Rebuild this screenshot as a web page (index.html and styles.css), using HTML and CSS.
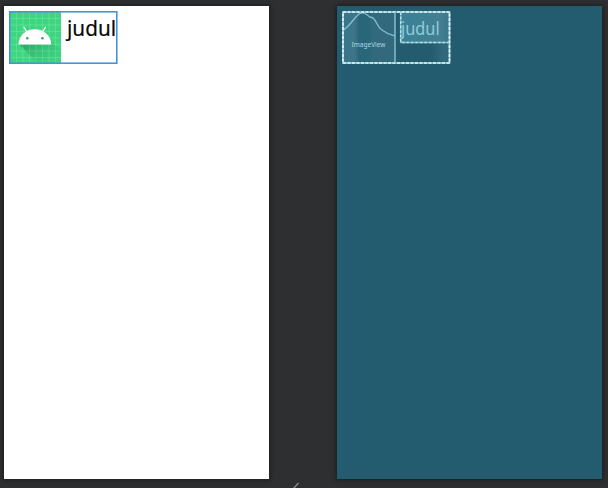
FILE: index.html
```html
<!DOCTYPE html>
<html lang="id">
<head>
<meta charset="utf-8">
<title>Layout Editor</title>
<link rel="stylesheet" href="styles.css">
</head>
<body>
<main class="editor">
  <section class="screen design">
    <div class="item">
      <svg class="launcher" viewBox="0 0 51 51">
        <defs>
          <linearGradient id="shade" x1="0" y1="0" x2="1" y2="1">
            <stop offset="0" stop-color="#26905c"/>
            <stop offset="1" stop-color="#3cd681" stop-opacity=".2"/>
          </linearGradient>
        </defs>
        <rect width="51" height="51" fill="#3ed780"/>
        <path d="M9 32L27 51H51V39L37.5 26Z" fill="url(#shade)"/>
        <path d="M6.5 0V51M13 0V51M19.5 0V51M26 0V51M32.5 0V51M39 0V51M45.5 0V51M0 6.5H51M0 13H51M0 19.5H51M0 26H51M0 32.5H51M0 39H51M0 45.5H51" fill="none" stroke="#a4f0c5" stroke-width=".7" opacity=".38"/>
        <path d="M16.6 19.5L14 15.3M32.8 19.5L35.4 15.3" stroke="#fff" stroke-width="1.3" stroke-linecap="round"/>
        <path d="M8.3 32.5C9 23.5 15.5 17.3 24.8 17.3S40.6 23.5 41.4 32.5Z" fill="#fff"/>
        <circle cx="17.3" cy="26.2" r="1.3" fill="#35a56b"/>
        <circle cx="32.4" cy="26.2" r="1.3" fill="#35a56b"/>
      </svg>
      <span class="title">judul</span>
      <svg class="outline" viewBox="0 0 109 53"><rect x=".8" y=".8" width="107" height="51.4" fill="none" stroke="#4a93d6" stroke-width="1.6"/></svg>
    </div>
  </section>
  <section class="screen blueprint">
    <div class="item">
      <div class="image-view">
        <svg class="mountain" viewBox="0 0 52 51">
          <path d="M0 18C7 15 13 2 18 1C22 0 24 3 27 5L30 6C34 9 34 15 39 18C43 21 47 23 52 24" fill="none" stroke="#80bdcc" stroke-width="1.4"/>
        </svg>
        <span class="view-name">ImageView</span>
      </div>
      <div class="text-view"><span class="title">judul</span></div>
      <svg class="outline" viewBox="0 0 109 53">
        <path d="M1 1H107.5V52H1Z" fill="none" stroke="#9bced8" stroke-width="1.7"/>
        <path d="M1 1H107.5V52H1Z" fill="none" stroke="#e0f5f8" stroke-width="1.7" stroke-dasharray="3 1.5"/>
        <path d="M53 1V52" fill="none" stroke="#86bdc9" stroke-width="1.5"/>
        <path d="M58.7 1V31.5H107.5" fill="none" stroke="#73adbd" stroke-width="1.5"/>
        <path d="M58.7 1V31.5H107.5" fill="none" stroke="#b0e0e9" stroke-width="1.5" stroke-dasharray="3 1.5"/>
      </svg>
    </div>
  </section>
</main>
<footer class="footer">
  <svg class="handle" viewBox="0 0 8 7"><path d="M1 7L6.5 1" stroke="#909294" stroke-width="1.2"/></svg>
</footer>
</body>
</html>
```
FILE: styles.css
```css
* { box-sizing: border-box; }
body {
  margin: 0;
  width: 608px;
  height: 488px;
  overflow: hidden;
  background: #2d2f31;
  font-family: "Noto Sans", sans-serif;
}
.editor {
  display: flex;
  gap: 68px;
  height: 480px;
  padding: 6px 0 0 4px;
}
.screen {
  flex: none;
  width: 265px;
  height: 473px;
  padding: 5px;
  box-shadow: 0 0 4px 1px #1c1d1e;
}
.design { background: #fff; }
.blueprint {
  background: #235c6f;
}
.item {
  display: flex;
  position: relative;
  width: 109px;
  height: 53px;
}
.launcher {
  flex: none;
  width: 51px;
  height: 51px;
  margin: 1px 0 0 1px;
}
.title {
  display: block;
  white-space: nowrap;
  transform-origin: left;
}
.design .title {
  margin-left: 6px;
  font-size: 22.4px;
  line-height: 33px;
  color: #080808;
  -webkit-text-stroke: 0.2px #080808;
  transform: scaleX(0.925);
}
.blueprint .item {
  width: 108px;
  background: linear-gradient(90deg, #235c6f 82%, #32687b 94%);
}
.image-view {
  display: flex;
  flex-direction: column;
  flex: none;
  width: 53px;
  height: 53px;
  padding: 1px;
  background: linear-gradient(90deg, #3c7588 0 24%, #2a6679 32% 50%, #32697d 58%);
}
.mountain {
  flex: none;
  width: 52px;
  height: 51px;
}
.view-name {
  margin-top: -26px;
  text-align: center;
  font-size: 7px;
  line-height: 15px;
  color: #a8d8e2;
  transform: scaleX(0.93);
}
.text-view {
  width: 49px;
  height: 32px;
  margin-left: 6px;
  background: linear-gradient(90deg, #3b8095, #427f92 78%, #3a7589);
}
.blueprint .title {
  font-size: 18.8px;
  line-height: 35px;
  color: #8fcbda;
  transform: scaleX(0.87);
}
.outline {
  position: absolute;
  top: 0;
  left: 0;
  width: 109px;
  height: 53px;
}
.footer {
  display: flex;
  height: 8px;
  padding: 2px 0 0 292px;
}
.handle {
  width: 8px;
  height: 7px;
}
```
